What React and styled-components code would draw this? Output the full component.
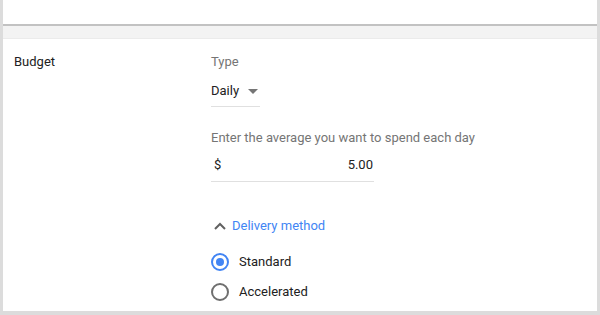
import styled, { createGlobalStyle } from "styled-components";

const Global = createGlobalStyle`
  body {
    margin: 0;
    background: #dcdcdc;
    font-family: Roboto, "Liberation Sans", sans-serif;
  }
`;

const Page = styled.div`
  width: 600px;
  height: 315px;
  box-sizing: border-box;
  padding: 0 3px 4px 3px;
  display: flex;
  flex-direction: column;
  background: #dcdcdc;
  overflow: hidden;
`;

const TopCard = styled.div`
  height: 24px;
  background: #fff;
  border-bottom: 2px solid #c2c2c2;
`;

const Band = styled.div`
  height: 12px;
  background: #f3f3f3;
  border-bottom: 1px solid #ebebeb;
`;

const Card = styled.div`
  flex: 1;
  background: #fff;
  display: flex;
  padding: 13px 0 0 11px;
`;

const Label = styled.div`
  width: 197px;
  font-size: 13px;
  color: #212121;
  line-height: 20px;
`;

const Body = styled.div`
  display: flex;
  flex-direction: column;
`;

const Caption = styled.div`
  font-size: 13px;
  color: #757575;
  line-height: 20px;
`;

const Select = styled.div`
  margin-top: 9px;
  width: 49px;
  height: 25px;
  display: flex;
  align-items: flex-start;
  gap: 9px;
  border-bottom: 1px solid #e0e0e0;
  font-size: 13px;
  color: #212121;
  line-height: 20px;
`;

const Arrow = styled.span`
  margin-top: 8px;
  width: 0;
  height: 0;
  border-left: 5px solid transparent;
  border-right: 5px solid transparent;
  border-top: 5px solid #757575;
`;

const Field = styled.div`
  margin-top: ${p => p.$top}px;
`;

const Amount = styled.div`
  margin-top: 7px;
  width: 163px;
  height: 27px;
  box-sizing: border-box;
  display: flex;
  justify-content: space-between;
  padding: 0 1px 0 3px;
  border-bottom: 1px solid #e0e0e0;
  font-size: 13px;
  color: #212121;
  line-height: 20px;
`;

const Toggle = styled.div`
  margin-top: 34px;
  display: flex;
  align-items: center;
  gap: 6px;
  padding-left: 3px;
  font-size: 13px;
  color: #4285f4;
  line-height: 20px;
`;

const Options = styled.div`
  margin-top: 16px;
  display: flex;
  flex-direction: column;
  gap: 10px;
`;

const Option = styled.label`
  display: flex;
  align-items: center;
  gap: 10px;
  font-size: 13px;
  color: #212121;
  line-height: 20px;
`;

const Radio = styled.span`
  width: 14px;
  height: 14px;
  border-radius: 50%;
  border: 2px solid ${p => (p.$on ? "#4285f4" : "#6f6f6f")};
  display: flex;
  align-items: center;
  justify-content: center;
  &::after {
    content: "";
    width: 8px;
    height: 8px;
    border-radius: 50%;
    background: ${p => (p.$on ? "#4285f4" : "transparent")};
  }
`;

const App = () => {
  return (
    <Page>
      <Global />
      <TopCard />
      <Band />
      <Card>
        <Label>Budget</Label>
        <Body>
          <Caption>Type</Caption>
          <Select>
            Daily
            <Arrow />
          </Select>
          <Field $top={21}>
            <Caption>Enter the average you want to spend each day</Caption>
            <Amount>
              <span>$</span>
              <span>5.00</span>
            </Amount>
          </Field>
          <Toggle>
            <svg width="12" height="8" viewBox="0 0 12 8">
              <path d="M1 7 L6 2 L11 7" fill="none" stroke="#616161" strokeWidth="2" />
            </svg>
            Delivery method
          </Toggle>
          <Options>
            <Option>
              <Radio $on />
              Standard
            </Option>
            <Option>
              <Radio />
              Accelerated
            </Option>
          </Options>
        </Body>
      </Card>
    </Page>
  );
};

export default App;
